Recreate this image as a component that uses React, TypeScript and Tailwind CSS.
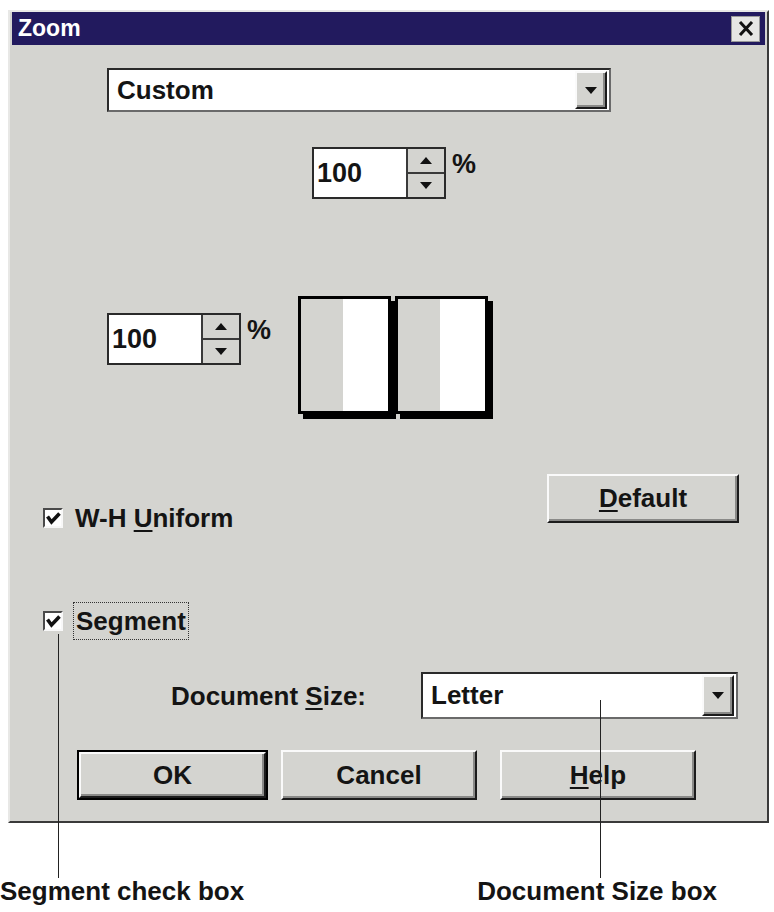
import React from "react";

const raised =
  "bg-[#d4d4d0] border-2 border-t-[#fafafa] border-l-[#fafafa] border-r-[#1c1c1c] border-b-[#1c1c1c] shadow-[inset_-2px_-2px_0_#8a8a88]";

const Arrow = ({ up = false }: { up?: boolean }) => (
  <svg width="12" height="7" viewBox="0 0 12 7">
    <path d={up ? "M6 0 L12 7 L0 7 Z" : "M0 0 L12 0 L6 7 Z"} fill="#111" />
  </svg>
);

const DropDown = ({ value, className }: { value: string; className: string }) => (
  <div
    className={`flex items-stretch bg-white border-2 border-t-[#2a2a2a] border-l-[#2a2a2a] border-r-[#6a6a6a] border-b-[#6a6a6a] ${className}`}
  >
    <div className="flex-1 flex items-center pl-2 text-[26px]">{value}</div>
    <div className={`w-[32px] flex items-center justify-center mr-[2px] my-[1px] ${raised}`}>
      <Arrow />
    </div>
  </div>
);

const Spinner = ({ className }: { className: string }) => (
  <div className={`flex items-start gap-[6px] ${className}`}>
    <div className="w-[134px] h-[52px] flex bg-white border-2 border-[#2a2a2a]">
      <div className="flex-1 flex items-center pl-[3px] text-[27px]">100</div>
      <div className="w-[38px] flex flex-col border-l-2 border-[#3a3a3a]">
        <div className="flex-1 flex items-center justify-center bg-[#d4d4d0] border-b-2 border-[#3a3a3a]">
          <Arrow up />
        </div>
        <div className="flex-1 flex items-center justify-center bg-[#d4d4d0]">
          <Arrow />
        </div>
      </div>
    </div>
    <div className="text-[27px] leading-none mt-[4px]">%</div>
  </div>
);

const Page = () => (
  <div className="w-[93px] h-[118px] flex shadow-[5px_5px_0_#000] border-[3px] border-black bg-[#d4d4d0]">
    <div className="w-[42px] bg-[#d4d4d0]" />
    <div className="flex-1 bg-white" />
  </div>
);

const Check = () => (
  <div className="w-[20px] h-[20px] bg-white flex items-center justify-center border-2 border-t-[#4a4a4a] border-l-[#4a4a4a] border-r-[#f8f8f8] border-b-[#f8f8f8]">
    <svg width="15" height="13" viewBox="0 0 15 13">
      <path d="M1.5 4.5 L5.5 10 L13.5 1.5" stroke="#111" strokeWidth="3.6" fill="none" />
    </svg>
  </div>
);

const Button = ({ children, className }: { children: React.ReactNode; className: string }) => (
  <div className={`flex items-center justify-center text-[26px] ${raised} ${className}`}>{children}</div>
);

export default function App() {
  return (
    <div className="relative w-[774px] h-[912px] bg-white text-[#141414] font-['Liberation_Sans',Arial,sans-serif] font-bold overflow-hidden">
      <div className="ml-[8px] mt-[10px] w-[761px] h-[813px] bg-[#d4d4d0] border-2 border-t-[#e8e8e6] border-l-[#e8e8e6] border-r-[#3a3a3a] border-b-[#3a3a3a] flex flex-col">
        <div className="mx-[2px] h-[33px] bg-[#221a5e] flex items-center justify-between pl-[6px] pr-[5px]">
          <span className="text-white text-[23px] leading-none">Zoom</span>
          <div className="w-[29px] h-[26px] bg-[#e6e6e4] border border-[#999] flex items-center justify-center">
            <svg width="16" height="15" viewBox="0 0 16 15">
              <path d="M2 1 L14 14 M14 1 L2 14" stroke="#111" strokeWidth="3" />
            </svg>
          </div>
        </div>

        <DropDown value="Custom" className="ml-[97px] mt-[23px] w-[504px] h-[44px]" />

        <Spinner className="ml-[302px] mt-[35px]" />

        <div className="flex items-start mt-[97px]">
          <Spinner className="ml-[97px] mt-[17px]" />
          <div className="flex gap-[4px] ml-[27px]">
            <Page />
            <Page />
          </div>
        </div>

        <div className="flex items-start mt-[60px]">
          <div className="flex items-center gap-[12px] ml-[33px] mt-[31px]">
            <Check />
            <span className="text-[26px] leading-none">
              W-H <span className="underline underline-offset-[3px] decoration-2">U</span>niform
            </span>
          </div>
          <Button className="ml-auto mr-[28px] w-[192px] h-[49px]">
            <span>
              <span className="underline underline-offset-[3px] decoration-2">D</span>efault
            </span>
          </Button>
        </div>

        <div className="flex items-center gap-[10px] ml-[33px] mt-[71px]">
          <Check />
          <span className="text-[26px] leading-none px-[2px] py-[5px] border border-dotted border-[#333]">
            Segment
          </span>
        </div>

        <div className="flex items-center mt-[32px]">
          <span className="ml-[161px] text-[26px] leading-none">
            Document <span className="underline underline-offset-[3px] decoration-2">S</span>ize:
          </span>
          <DropDown value="Letter" className="ml-[55px] w-[317px] h-[47px]" />
        </div>

        <div className="flex mt-[31px]">
          <div className="ml-[67px] border-2 border-black">
            <Button className="w-[187px] h-[46px]">OK</Button>
          </div>
          <Button className="ml-[13px] w-[196px] h-[50px]">Cancel</Button>
          <Button className="ml-[23px] w-[196px] h-[50px]">
            <span>
              <span className="underline underline-offset-[3px] decoration-2">H</span>elp
            </span>
          </Button>
        </div>
      </div>

      <div className="flex mt-[55px] text-[26px] leading-none">
        <span className="ml-[0px]">Segment check box</span>
        <span className="ml-[233px]">Document Size box</span>
      </div>

      <div className="absolute left-[58px] top-[634px] w-[1px] h-[244px] bg-[#222]" />
      <div className="absolute left-[600px] top-[700px] w-[1px] h-[178px] bg-[#222]" />
    </div>
  );
}
